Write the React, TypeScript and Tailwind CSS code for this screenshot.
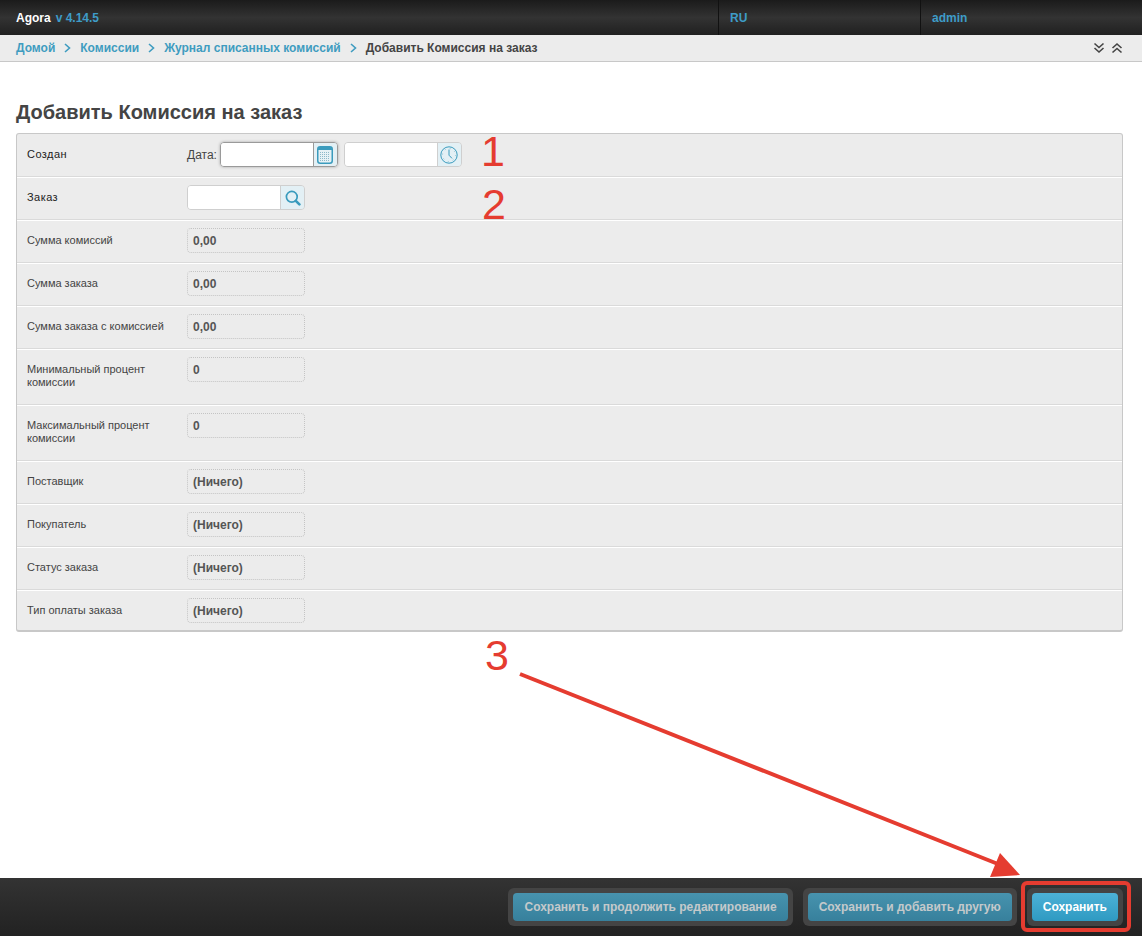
import React from "react";

const Sep = () => (
  <svg width="7" height="10" viewBox="0 0 7 10" className="mx-[9px]" fill="none" stroke="#3f9cc0" strokeWidth="1.6">
    <path d="M1 1l4.5 4L1 9" />
  </svg>
);

const CalendarIcon = () => (
  <svg width="16" height="18" viewBox="0 0 16 18">
    <rect x="0.75" y="0.75" width="14.5" height="16.5" rx="2.5" fill="#e6f1f5" stroke="#3a9bbd" strokeWidth="1.5" />
    <path d="M1 3a2 2 0 0 1 2-2h10a2 2 0 0 1 2 2v1H1z" fill="#3a9bbd" />
    <g stroke="#8cb9c9" strokeWidth="1" strokeDasharray="1 1">
      <path d="M3 6.5h10M3 8.5h10M3 10.5h10M3 12.5h10M3 14.5h10" />
    </g>
  </svg>
);

const ClockIcon = () => (
  <svg width="18" height="18" viewBox="0 0 18 18" fill="none">
    <circle cx="9" cy="9" r="8.2" stroke="#3a9bbd" strokeWidth="1" />
    <path d="M9 3.5v5.7l3 3.2" stroke="#3a9bbd" strokeWidth="1" />
    <circle cx="9" cy="9" r="6.5" stroke="#8fc3d6" strokeWidth="1" strokeDasharray="1 4.1" />
  </svg>
);

const SearchIcon = () => (
  <svg width="16" height="16" viewBox="0 0 16 16" fill="none">
    <circle cx="6.8" cy="6.8" r="5.4" stroke="#3a9bbd" strokeWidth="1.7" />
    <path d="M10.8 10.8l3.6 3.6" stroke="#3a9bbd" strokeWidth="2.6" strokeLinecap="round" />
  </svg>
);

const DoubleChevron = ({ up }: { up?: boolean }) => (
  <svg width="12" height="12" viewBox="0 0 12 12" fill="none" stroke="#444" strokeWidth="1.6" className={up ? "rotate-180" : ""}>
    <path d="M1.5 1.5L6 5.5l4.5-4M1.5 6L6 10l4.5-4" />
  </svg>
);

function InputGroup({ focused, icon }: { focused?: boolean; icon: React.ReactNode }) {
  return (
    <div
      className={
        "flex h-[25px] w-[118px] overflow-hidden rounded-[4px] border " +
        (focused ? "border-[#9a9a9a] shadow-[0_0_3px_rgba(0,0,0,0.3)]" : "border-[#cfcfcf]")
      }
    >
      <div className="flex-1 bg-white" />
      <div className={"flex w-[24px] items-center justify-center border-l bg-[#e3f0f5] " + (focused ? "border-[#9a9a9a]" : "border-[#cfcfcf]")}>
        {icon}
      </div>
    </div>
  );
}

const ReadOnly = ({ value }: { value: string }) => (
  <div className="flex h-[25px] w-[118px] items-center rounded-[4px] border border-dotted border-[#c4c4c4] pl-[5px] text-[12px] font-bold text-[#555]">
    {value}
  </div>
);

function Row({ label, strong, tall, last, children }: { label: string; strong?: boolean; tall?: boolean; last?: boolean; children: React.ReactNode }) {
  return (
    <div className={"flex border-[#dadada] pl-[10px] pt-[8px] " + (tall ? "h-[56px] " : last ? "h-[40px] " : "h-[43px] ") + (last ? "" : "border-b shadow-[0_1px_0_#fff]")}>
      <div className={"w-[160px] pr-[4px] pt-[6px] text-[11px] leading-[13px] " + (strong ? "tracking-[0.45px] text-[#222]" : "text-[#444]")}>{label}</div>
      <div className="flex items-start">{children}</div>
    </div>
  );
}

const SaveButton = ({ label, active }: { label: string; active?: boolean }) => (
  <div className="rounded-[6px] bg-[#444] p-[5px]">
    <button
      className={
        "h-[28px] rounded-[4px] px-[11px] text-[12px] font-bold " +
        (active
          ? "bg-gradient-to-b from-[#4cb1d6] to-[#2e9ac2] text-white"
          : "bg-gradient-to-b from-[#4793ae] to-[#37809c] text-[#c4c9cb]")
      }
    >
      {label}
    </button>
  </div>
);

export default function App() {
  return (
    <div className="relative flex h-[936px] flex-col overflow-hidden bg-white font-['Liberation_Sans',Arial,sans-serif]">
      <header className="flex h-[35px] items-stretch bg-gradient-to-b from-[#1b1b1b] via-[#333333] to-[#202020] text-[12px] font-bold">
        <div className="flex flex-1 items-center pl-[16px]">
          <span className="text-white">Agora</span>
          <span className="ml-[5px] text-[#3e9cc8]">v 4.14.5</span>
        </div>
        <div className="flex w-[202px] items-center border-l border-[#111] pl-[11px] text-[#3e9cc8]">RU</div>
        <div className="flex w-[222px] items-center border-l border-[#111] pl-[11px] text-[#3e9cc8]">admin</div>
      </header>

      <nav className="flex h-[27px] items-center border-b border-[#c8c8c8] bg-[#ececec] pl-[16px] pr-[19px] text-[12px] font-bold">
        <a className="text-[#3f9cc0]">Домой</a>
        <Sep />
        <a className="text-[#3f9cc0]">Комиссии</a>
        <Sep />
        <a className="text-[#3f9cc0]">Журнал списанных комиссий</a>
        <Sep />
        <span className="text-[#444]">Добавить Комиссия на заказ</span>
        <div className="ml-auto flex gap-[6px]">
          <DoubleChevron />
          <DoubleChevron up />
        </div>
      </nav>

      <main className="flex-1 px-[16px] pr-[19px] pt-[37px]">
        <h1 className="mb-[8px] text-[20px] font-bold leading-[26px] text-[#444]">Добавить Комиссия на заказ</h1>
        <div className="rounded-[3px] border border-b-2 border-[#c8c8c8] bg-[#ececec]">
          <Row label="Создан" strong>
            <span className="mr-[3px] pt-[4px] text-[12px] text-[#444]">Дата:</span>
            <InputGroup focused icon={<CalendarIcon />} />
            <div className="w-[6px]" />
            <InputGroup icon={<ClockIcon />} />
          </Row>
          <Row label="Заказ" strong>
            <InputGroup icon={<SearchIcon />} />
          </Row>
          <Row label="Сумма комиссий"><ReadOnly value="0,00" /></Row>
          <Row label="Сумма заказа"><ReadOnly value="0,00" /></Row>
          <Row label="Сумма заказа с комиссией"><ReadOnly value="0,00" /></Row>
          <Row label="Минимальный процент комиссии" tall><ReadOnly value="0" /></Row>
          <Row label="Максимальный процент комиссии" tall><ReadOnly value="0" /></Row>
          <Row label="Поставщик"><ReadOnly value="(Ничего)" /></Row>
          <Row label="Покупатель"><ReadOnly value="(Ничего)" /></Row>
          <Row label="Статус заказа"><ReadOnly value="(Ничего)" /></Row>
          <Row label="Тип оплаты заказа" last><ReadOnly value="(Ничего)" /></Row>
        </div>
      </main>

      <footer className="flex h-[58px] items-center justify-end gap-[10px] bg-gradient-to-b from-[#333333] to-[#222222] pr-[19px]">
        <SaveButton label="Сохранить и продолжить редактирование" />
        <SaveButton label="Сохранить и добавить другую" />
        <SaveButton label="Сохранить" active />
      </footer>

      {/* Red annotations laid over the screenshot */}
      <span className="absolute left-[481px] top-[126px] text-[43px] leading-[50px] text-[#e53c30]">1</span>
      <span className="absolute left-[482px] top-[179px] text-[43px] leading-[50px] text-[#e53c30]">2</span>
      <span className="absolute left-[485px] top-[630px] text-[43px] leading-[50px] text-[#e53c30]">3</span>
      <svg className="pointer-events-none absolute left-0 top-0" width="1142" height="936" fill="none">
        <path d="M520 674L1003 866" stroke="#e53c30" strokeWidth="4" />
        <path d="M1020 875L990 877L1000 853Z" fill="#e53c30" />
      </svg>
      <div className="pointer-events-none absolute left-[1021px] top-[881px] h-[51px] w-[110px] rounded-[6px] border-4 border-[#e53c30]" />
    </div>
  );
}
